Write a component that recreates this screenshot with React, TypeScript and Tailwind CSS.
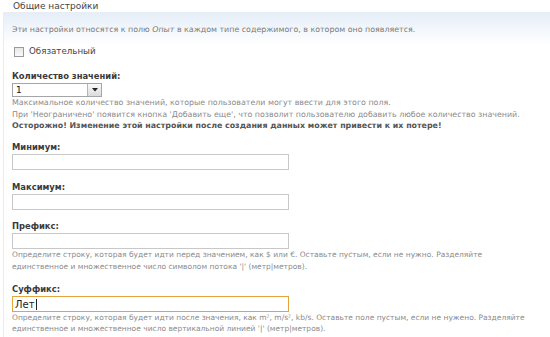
import React from 'react'

function Label({ children, className = '' }: { children: React.ReactNode; className?: string }) {
  return (
    <div className={`text-[8.4px] leading-[12px] font-bold text-[#3a3a3a] ${className}`}>{children}</div>
  )
}

function TextInput({ value, focused }: { value?: string; focused?: boolean }) {
  return (
    <div
      className={`mt-[1px] h-[16px] w-[277px] border bg-white px-[2px] text-[10px] leading-[14px] text-[#222] ${
        focused ? 'border-[#e5a33d]' : 'border-[#c8c8c8]'
      }`}
    >
      {value}
      {focused && <span className="ml-[1px] inline-block h-[11px] w-px translate-y-[2px] bg-[#222]" />}
    </div>
  )
}

function Help({ children, className = '' }: { children: React.ReactNode; className?: string }) {
  return <div className={`text-[#8a8a8a] ${className}`}>{children}</div>
}

export default function App() {
  return (
    <div className="h-[337px] w-[550px] overflow-hidden bg-white font-['DejaVu_Sans',sans-serif]">
      {/* Legend */}
      <div className="pl-[13px] text-[9px] leading-[12px] text-[#444]">Общие настройки</div>

      <div className="ml-[3px] border-l border-t border-[#e6edf5] bg-gradient-to-b from-[#e6eef8] to-white to-[32px] px-[8px] pb-4">
        <div className="pt-[11px] text-[7.9px] leading-[12px] text-[#7a7a7a]">
          Эти настройки относятся к полю <em>Опыт</em> в каждом типе содержимого, в котором оно появляется.
        </div>

        {/* Required */}
        <div className="mt-[10px] flex h-[12px] items-center gap-[5px] pl-[2px]">
          <span className="h-[10px] w-[10px] border border-[#9a9a9a] bg-gradient-to-b from-[#e8e8e8] to-[#fafafa]" />
          <span className="text-[8.7px] text-[#444]">Обязательный</span>
        </div>

        {/* Number of values */}
        <Label className="mt-[12px]">Количество значений:</Label>
        <div className="mt-[1px] flex h-[14px] w-[90px] items-stretch border border-[#a5a5a5] bg-white">
          <span className="flex-1 pl-[3px] text-[9px] leading-[12px] text-[#111]">1</span>
          <span className="flex w-[14px] items-center justify-center border-l border-[#b5b5b5] bg-gradient-to-b from-[#fafafa] to-[#dcdcdc]">
            <svg width="6" height="4" viewBox="0 0 6 4">
              <path d="M0 0h6L3 3.5z" fill="#222" />
            </svg>
          </span>
        </div>
        <Help className="w-[540px] text-[7.9px] leading-[11.5px]">
          <div>Максимальное количество значений, которые пользователи могут ввести для этого поля.</div>
          <div>При 'Неограничено' появится кнопка 'Добавить еще', что позволит пользователю добавить любое количество значений.</div>
          <div className="font-bold text-[#555]">
            Осторожно! Изменение этой настройки после создания данных может привести к их потере!
          </div>
        </Help>

        <Label className="mt-[9px]">Минимум:</Label>
        <TextInput />

        <Label className="mt-[11px]">Максимум:</Label>
        <TextInput />

        <Label className="mt-[10px]">Префикс:</Label>
        <TextInput />
        <Help className="w-[518px] text-[7.5px] leading-[12px]">
          Определите строку, которая будет идти перед значением, как $ или €. Оставьте пустым, если не нужно. Разделяйте
          единственное и множественное число символом потока '|' (метр|метров).
        </Help>

        <Label className="mt-[10px]">Суффикс:</Label>
        <TextInput value="Лет" focused />
        <Help className="w-[518px] text-[7.5px] leading-[11.5px]">
          Определите строку, которая будет идти после значения, как m², m/s², kb/s. Оставьте поле пустым, если не нужено.
          Разделяйте единственное и множественное число вертикальной линией '|' (метр|метров).
        </Help>
      </div>
    </div>
  )
}
